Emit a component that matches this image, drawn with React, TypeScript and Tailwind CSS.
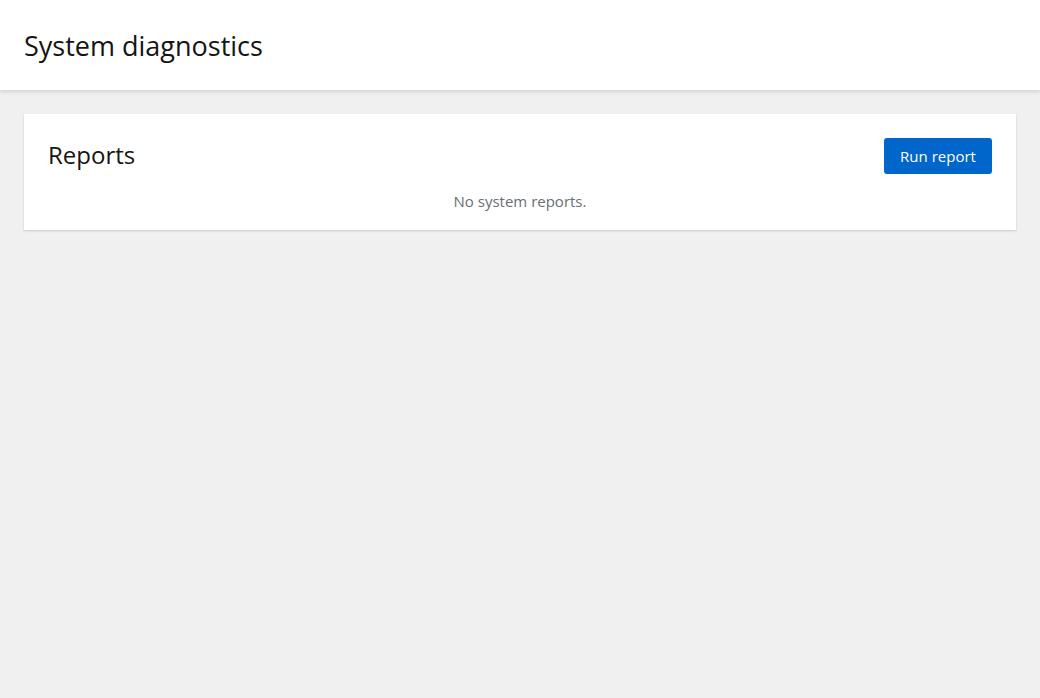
export default function App() {
  return (
    <div className="min-h-[698px] bg-[#f0f0f0] font-['Open_Sans',sans-serif] text-[#151515]">
      <header className="flex h-[90px] items-center bg-white px-6 shadow-[0_2px_4px_rgba(0,0,0,0.12)]">
        <h1 className="text-[27px] leading-none">System diagnostics</h1>
      </header>
      <main className="p-6">
        <section className="bg-white px-6 pt-6 pb-[17px] shadow-[0_1px_2px_rgba(0,0,0,0.16)]">
          <div className="flex items-center justify-between">
            <h2 className="-mt-0.5 text-2xl">Reports</h2>
            <button className="h-9 w-[108px] rounded-[3px] bg-[#0066cc] text-[15px] text-white">
              Run report
            </button>
          </div>
          <p className="mt-[15px] text-center text-[15px] leading-6 text-[#6a6e73]">No system reports.</p>
        </section>
      </main>
    </div>
  )
}
